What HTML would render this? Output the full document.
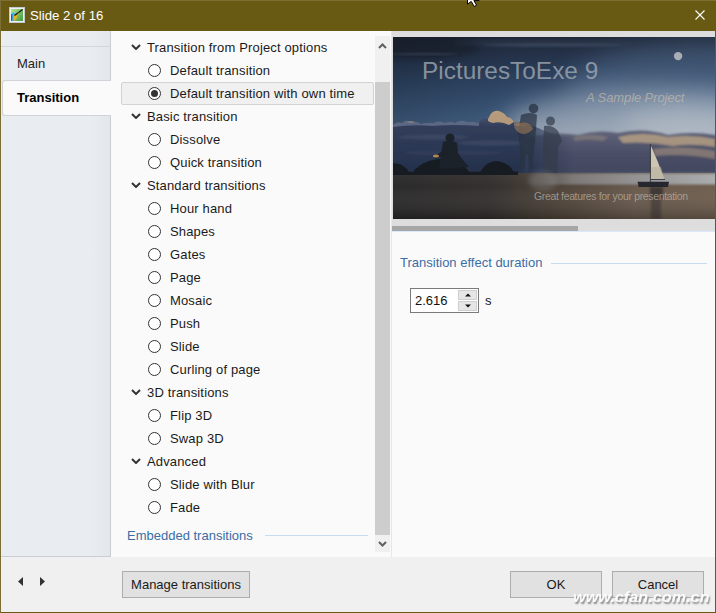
<!DOCTYPE html>
<html><head><meta charset="utf-8">
<style>
*{box-sizing:border-box;margin:0;padding:0}
html,body{width:716px;height:613px;overflow:hidden;background:#695a13}
body{position:relative;font-family:"Liberation Sans",sans-serif;font-size:13px;color:#1a1a1a}
.abs{position:absolute}
#win{position:absolute;left:0;top:0;width:716px;height:613px;background:#695a13}
#title{position:absolute;left:30px;top:7px;color:#fff;font-size:13.2px;line-height:18px}
#left{position:absolute;left:1px;top:31px;width:110px;height:526px;background:linear-gradient(to right,#e9ecf0 0,#e9ecf0 90px,#e3e6ea 109px);border-right:1px solid #c9ccd1;border-bottom:1px solid #c9ccd1}
#mid{position:absolute;left:111px;top:31px;width:280px;height:526px;background:#fafafa}
#split{position:absolute;left:391px;top:31px;width:1px;height:526px;background:#dbe7fb}
#right{position:absolute;left:392px;top:31px;width:323px;height:526px;background:#fafafa}
#bottom{position:absolute;left:1px;top:557px;width:714px;height:55px;background:#f0f0f0}
.row{position:absolute;left:0;height:23px;line-height:23px;white-space:nowrap;letter-spacing:0.15px}
.hdr{left:36px}
.itm{left:59px}
.chev{position:absolute;left:20px;top:9px}
.radio{position:absolute;left:37px;top:5px;width:13px;height:13px;border:1px solid #333;border-radius:50%;background:#fff}
.btn{position:absolute;top:571px;height:27px;background:#e1e1e1;border:1px solid #adadad;text-align:center;line-height:26px;color:#1a1a1a}
</style></head><body>
<div id="win">
  <!-- title icon -->
  <svg class="abs" style="left:9px;top:7px" width="16" height="16" viewBox="0 0 16 16">
    <defs><linearGradient id="ig" x1="0" y1="0" x2="1" y2="1"><stop offset="0" stop-color="#b4e69a"/><stop offset="1" stop-color="#3f9a3a"/></linearGradient></defs>
    <rect x="0.5" y="0.5" width="15" height="15" fill="#eef0f4" stroke="#c4c8d0"/>
    <rect x="2" y="2" width="12" height="12" fill="url(#ig)"/>
    <path d="M2 14 L2 7.8 Q2.4 5.8 4.6 5.8 L6 5.8 L4.8 14 Z" fill="#42b4e6"/>
    <path d="M2 13.8 L2 8.2 Q2.4 7 3.4 7 L3.2 13.8 Z" fill="#1a5fb0"/>
    <path d="M4.6 8.2 Q6.5 7 8.2 8.4 L7.8 11 Q7 13 6 13.6 L5 13.6 Q4.2 12 4.6 11 Z" fill="#e8b020"/>
    <path d="M5.5 8.6 L13.6 2.6" stroke="#1a1a10" stroke-width="1.3"/>
    <path d="M8.5 7 L10 5.6" stroke="#d4a020" stroke-width="0.6"/>
  </svg>
  <div id="title">Slide 2 of 16</div>
  <svg class="abs" style="left:695px;top:10px" width="10" height="10" viewBox="0 0 10 10"><path d="M0.5 0.5L9.5 9.5M9.5 0.5L0.5 9.5" stroke="#fff" stroke-width="1.1"/></svg>

  <div id="left">
    <div class="abs" style="left:0;top:15px;width:109px;height:1px;background:#d3d6db"></div>
    <div class="abs" style="left:16px;top:24px;line-height:18px;color:#1e1e1e">Main</div>
    <div class="abs" style="left:1px;top:49px;width:109px;height:36px;background:#fafafa;border:1px solid #d0d3d8;border-right:none;border-radius:3px 0 0 3px"></div>
    <div class="abs" style="left:16px;top:58px;line-height:18px;font-weight:bold;color:#000">Transition</div>
  </div>

  <div id="mid">
    <!-- selection -->
    <div class="abs" style="left:10px;top:51px;width:253px;height:23px;background:#f0f0f0;border:1px solid #d2d2d2;border-radius:2px"></div>
    <div id="list">
<svg class="abs" style="left:20px;top:13px" width="10" height="6" viewBox="0 0 10 6"><path d="M1 1L5 5L9 1" fill="none" stroke="#333" stroke-width="2"/></svg><div class="row hdr" style="top:5px">Transition from Project options</div>
<div class="radio" style="top:33px"></div><div class="row itm" style="top:28px">Default transition</div>
<div class="radio" style="top:56px"></div><div class="abs" style="left:40px;top:59px;width:7px;height:7px;border-radius:50%;background:#333"></div><div class="row itm" style="top:51px">Default transition with own time</div>
<svg class="abs" style="left:20px;top:82px" width="10" height="6" viewBox="0 0 10 6"><path d="M1 1L5 5L9 1" fill="none" stroke="#333" stroke-width="2"/></svg><div class="row hdr" style="top:74px">Basic transition</div>
<div class="radio" style="top:102px"></div><div class="row itm" style="top:97px">Dissolve</div>
<div class="radio" style="top:125px"></div><div class="row itm" style="top:120px">Quick transition</div>
<svg class="abs" style="left:20px;top:151px" width="10" height="6" viewBox="0 0 10 6"><path d="M1 1L5 5L9 1" fill="none" stroke="#333" stroke-width="2"/></svg><div class="row hdr" style="top:143px">Standard transitions</div>
<div class="radio" style="top:171px"></div><div class="row itm" style="top:166px">Hour hand</div>
<div class="radio" style="top:194px"></div><div class="row itm" style="top:189px">Shapes</div>
<div class="radio" style="top:217px"></div><div class="row itm" style="top:212px">Gates</div>
<div class="radio" style="top:240px"></div><div class="row itm" style="top:235px">Page</div>
<div class="radio" style="top:263px"></div><div class="row itm" style="top:258px">Mosaic</div>
<div class="radio" style="top:286px"></div><div class="row itm" style="top:281px">Push</div>
<div class="radio" style="top:309px"></div><div class="row itm" style="top:304px">Slide</div>
<div class="radio" style="top:332px"></div><div class="row itm" style="top:327px">Curling of page</div>
<svg class="abs" style="left:20px;top:358px" width="10" height="6" viewBox="0 0 10 6"><path d="M1 1L5 5L9 1" fill="none" stroke="#333" stroke-width="2"/></svg><div class="row hdr" style="top:350px">3D transitions</div>
<div class="radio" style="top:378px"></div><div class="row itm" style="top:373px">Flip 3D</div>
<div class="radio" style="top:401px"></div><div class="row itm" style="top:396px">Swap 3D</div>
<svg class="abs" style="left:20px;top:427px" width="10" height="6" viewBox="0 0 10 6"><path d="M1 1L5 5L9 1" fill="none" stroke="#333" stroke-width="2"/></svg><div class="row hdr" style="top:419px">Advanced</div>
<div class="radio" style="top:447px"></div><div class="row itm" style="top:442px">Slide with Blur</div>
<div class="radio" style="top:470px"></div><div class="row itm" style="top:465px">Fade</div>
</div>
    <!-- scrollbar -->
    <div class="abs" style="left:264px;top:5px;width:15px;height:516px;background:#f0f0f0"></div>
    <div class="abs" style="left:264px;top:51px;width:15px;height:453px;background:#cdcdcd"></div>
    <svg class="abs" style="left:267px;top:11px" width="9" height="7" viewBox="0 0 9 7"><path d="M1 6L4.5 2.5L8 6" fill="none" stroke="#606060" stroke-width="2"/></svg>
    <svg class="abs" style="left:267px;top:510px" width="9" height="7" viewBox="0 0 9 7"><path d="M1 1L4.5 4.5L8 1" fill="none" stroke="#606060" stroke-width="2"/></svg>
    <div class="abs" style="left:16px;top:496px;color:#3a6ea5;line-height:18px">Embedded transitions</div>
    <div class="abs" style="left:154px;top:504px;width:103px;height:1px;background:#c9dbef"></div>
  </div>
  <div id="split"></div>

  <div id="right">
    <div class="abs" style="left:0;top:0;width:323px;height:200px;background:#dddddd"></div>
    <div id="photo" class="abs" style="left:1px;top:6px;width:322px;height:182px;overflow:hidden;background:#2c3e57"><svg width="322" height="182" viewBox="0 0 322 182">
<defs>
<linearGradient id="sky" x1="0" y1="0" x2="0" y2="1">
<stop offset="0" stop-color="#20293a"/>
<stop offset="0.1" stop-color="#26344c"/>
<stop offset="0.25" stop-color="#304868"/>
<stop offset="0.42" stop-color="#3f5c80"/>
<stop offset="0.55" stop-color="#4f6d90"/>
<stop offset="0.75" stop-color="#6a84a2"/>
</linearGradient>
<radialGradient id="haze" cx="0.78" cy="0.58" r="0.45">
<stop offset="0" stop-color="#c2c6cc" stop-opacity="0.85"/>
<stop offset="0.5" stop-color="#aab4bf" stop-opacity="0.45"/>
<stop offset="1" stop-color="#8fa0b2" stop-opacity="0"/>
</radialGradient>
<linearGradient id="skyL" x1="0" y1="0" x2="1" y2="0">
<stop offset="0" stop-color="#000" stop-opacity="0.2"/>
<stop offset="0.4" stop-color="#000" stop-opacity="0.05"/>
<stop offset="1" stop-color="#000" stop-opacity="0"/>
</linearGradient>
<linearGradient id="waterV" x1="0" y1="0" x2="0" y2="1">
<stop offset="0" stop-color="#fff" stop-opacity="0.06"/>
<stop offset="0.3" stop-color="#fff" stop-opacity="0.02"/>
<stop offset="1" stop-color="#000" stop-opacity="0.22"/>
</linearGradient>
<linearGradient id="waterH" x1="0" y1="0" x2="1" y2="0">
<stop offset="0" stop-color="#272627"/>
<stop offset="0.3" stop-color="#2f2c2a"/>
<stop offset="0.5" stop-color="#4a3f35"/>
<stop offset="0.75" stop-color="#66574a"/>
<stop offset="1" stop-color="#6c5c4c"/>
</linearGradient>
<linearGradient id="strip" x1="0" y1="0" x2="1" y2="0">
<stop offset="0" stop-color="#8a8c90" stop-opacity="0"/>
<stop offset="0.25" stop-color="#9a9ea4" stop-opacity="0.55"/>
<stop offset="1" stop-color="#b4b8bd" stop-opacity="0.9"/>
</linearGradient>
<linearGradient id="cloudL" x1="0" y1="0" x2="0" y2="1">
<stop offset="0" stop-color="#4e5a78"/>
<stop offset="0.25" stop-color="#313d5a"/>
<stop offset="1" stop-color="#24304a"/>
</linearGradient>
<linearGradient id="cloudR" x1="0" y1="0" x2="0" y2="1">
<stop offset="0" stop-color="#60647a"/>
<stop offset="0.5" stop-color="#4a4e66"/>
<stop offset="1" stop-color="#40465e"/>
</linearGradient>
<filter id="b1" x="-20%" y="-20%" width="140%" height="140%"><feGaussianBlur stdDeviation="1.2"/></filter>
<filter id="b2" x="-30%" y="-30%" width="160%" height="160%"><feGaussianBlur stdDeviation="2.5"/></filter>
<filter id="b6" x="-50%" y="-100%" width="200%" height="300%"><feGaussianBlur stdDeviation="12"/></filter>
<linearGradient id="fadeG" x1="0" y1="0" x2="1" y2="0"><stop offset="0" stop-color="#fff"/><stop offset="0.72" stop-color="#fff"/><stop offset="1" stop-color="#000"/></linearGradient>
<mask id="fadeM" maskUnits="userSpaceOnUse" x="-10" y="0" width="200" height="182"><rect x="-10" y="0" width="190" height="182" fill="url(#fadeG)"/></mask>
<filter id="b05" x="-20%" y="-20%" width="140%" height="140%"><feGaussianBlur stdDeviation="0.6"/></filter>
</defs>
<rect width="322" height="182" fill="url(#sky)"/>
<ellipse cx="300" cy="55" rx="130" ry="50" fill="#5a7595" opacity="0.45" filter="url(#b6)"/>
<ellipse cx="260" cy="90" rx="150" ry="40" fill="#a8b4c2" opacity="0.6" filter="url(#b6)"/>
<ellipse cx="250" cy="100" rx="140" ry="22" fill="#b4bcc6" opacity="0.6" filter="url(#b6)"/>
<ellipse cx="290" cy="92" rx="60" ry="22" fill="#c0c6cc" opacity="0.5" filter="url(#b6)"/>
<rect width="322" height="140" fill="url(#skyL)"/>
<!-- dark cloud streaks top-left -->
<ellipse cx="30" cy="10" rx="55" ry="12" fill="#141a26" opacity="0.55" filter="url(#b2)"/>
<ellipse cx="150" cy="6" rx="90" ry="3" fill="#4a5a70" opacity="0.25" filter="url(#b2)"/>
<ellipse cx="30" cy="17" rx="35" ry="1.2" fill="#5a6a80" opacity="0.3" filter="url(#b1)"/>
<ellipse cx="160" cy="8" rx="70" ry="1.5" fill="#4a5a70" opacity="0.45" filter="url(#b1)"/>
<!-- right clouds -->
<g filter="url(#b1)">
<path d="M135 100 Q160 94 185 98 Q205 92 225 96 Q250 90 275 98 Q300 94 322 98 L332 98 L332 140 L135 140 Z" fill="url(#cloudR)"/>
<path d="M225 100 Q250 94 275 100 Q300 97 322 102 L322 110 Q300 106 280 109 Q255 104 230 106 Z" fill="#c7ac88" opacity="0.7"/>
<path d="M260 112 Q290 108 322 114 L322 122 Q290 116 262 119 Z" fill="#b89e80" opacity="0.5"/>
<path d="M180 100 Q200 96 215 100 L210 104 Q195 101 182 104 Z" fill="#a09080" opacity="0.45"/>
</g>
<!-- left clouds -->
<g filter="url(#b05)" mask="url(#fadeM)">
<path d="M-10 90 L0 88 Q4 84 9 86 Q13 82 18 85 Q24 84 28 87 Q34 85 40 86 Q46 83 52 86 Q58 84 62 86 Q68 82 74 85 Q80 84 86 86 Q90 80 95 82 Q99 72 106 74 Q112 76 114 80 Q118 80 121 85 Q128 84 134 87 Q144 90 152 94 Q165 98 180 102 L180 140 L-10 140 Z" fill="url(#cloudL)"/>
<path d="M0 88 Q4 84 9 86 Q13 82 18 85 Q24 84 28 87 Q34 85 40 86 Q46 83 52 86 Q58 84 62 86 Q68 82 74 85 Q80 84 86 86 L86 89 Q60 87 40 89 Q20 87 0 90 Z" fill="#7a86a0" opacity="0.55"/>
<path d="M95 82 Q99 72 106 74 Q112 76 114 80 Q118 80 121 85 L116 88 Q108 84 100 86 Q96 85 95 84 Z" fill="#d2ae80" opacity="0.8"/>
<path d="M121 85 Q128 84 134 87 L132 90 Q126 88 121 89 Z" fill="#b89a78" opacity="0.5"/>
<path d="M14 85 Q18 83 22 85 L18 86 Z" fill="#c0a080" opacity="0.5"/>
</g>
<g filter="url(#b1)">
<ellipse cx="40" cy="100" rx="35" ry="2.5" fill="#4a5672" opacity="0.45"/>
<ellipse cx="100" cy="106" rx="35" ry="2.5" fill="#4a5672" opacity="0.45"/>
<ellipse cx="60" cy="116" rx="50" ry="2" fill="#3e4a66" opacity="0.4"/>
</g>
<!-- water -->
<rect x="0" y="136" width="322" height="46" fill="url(#waterH)"/>
<rect x="0" y="136" width="322" height="46" fill="url(#waterV)"/>
<rect x="130" y="136.5" width="200" height="11" fill="url(#strip)" filter="url(#b1)"/>
<!-- rocks -->
<g fill="#191c24" filter="url(#b05)">
<path d="M0 126 Q8 126 14 132 L18 138 L0 138 Z"/>
<path d="M18 138 Q26 124 46 122 Q66 122 74 132 L78 138 Z"/>
<path d="M86 138 Q92 124 104 124 Q118 126 122 138 Z"/>
<path d="M0 135 L125 134.5 L125 138 L0 138 Z"/>
</g>
<!-- sitting person -->
<g fill="#1b202b" filter="url(#b05)">
<circle cx="57" cy="101" r="4.5"/>
<path d="M50 105 Q57 102 64 106 L65 116 Q70 124 76 130 L46 132 Q48 118 50 105 Z"/>
<path d="M51 112 L41 121 L44 122 L53 116 Z"/>
</g>
<ellipse cx="43" cy="119" rx="3" ry="1.5" fill="#d09a5a" opacity="0.8" filter="url(#b05)"/>
<!-- standing ghosts -->
<g filter="url(#b05)">
<circle cx="140.5" cy="71.5" r="4.8" fill="#2a3142" opacity="0.75"/>
<path d="M128 78 Q138 74 144 78 L143 92 L142 104 L140 120 L140 132 L137 132 L135 118 L133 118 L131 132 L127 132 L127 112 L125 96 Z" fill="#2a3142" opacity="0.72"/>
<path d="M121 90 Q127 84 134 86 Q139 88 140 92 Q136 97 130 97 Q124 96 121 90 Z" fill="#b08858" opacity="0.5"/>
<circle cx="157.5" cy="84" r="4.5" fill="#333a4a" opacity="0.7"/>
<path d="M151 89 Q160 88 165 94 L169 104 L165 110 L164 136 L150 136 L150 110 Z" fill="#333a4a" opacity="0.7"/>
</g>
<ellipse cx="150" cy="144" rx="14" ry="10" fill="#b0b4b8" opacity="0.2" filter="url(#b2)"/>
<!-- sailboat -->
<path d="M257.6 108 Q265 124 271.2 142 L257.6 142 Z" fill="#cdc6b0" filter="url(#b05)"/>
<path d="M257.6 130 L268 130 L271.2 142 L257.6 142 Z" fill="#b8b2a0" opacity="0.6" filter="url(#b05)"/>
<line x1="257.4" y1="107" x2="257.4" y2="145" stroke="#2a2a30" stroke-width="0.8"/>
<line x1="257.6" y1="142.5" x2="272" y2="142.5" stroke="#3a4050" stroke-width="1"/>
<path d="M244.6 144.8 L276 144.8 L275 150 L245.6 150 Z" fill="#26282f" filter="url(#b05)"/>
<rect x="257" y="150" width="13" height="10" fill="#1f1f24" opacity="0.55" filter="url(#b1)"/>
<rect x="258" y="158" width="10" height="24" fill="#1f1f24" opacity="0.35" filter="url(#b1)"/>
<!-- moon -->
<circle cx="285.1" cy="19.1" r="4.2" fill="#a9adb5" filter="url(#b05)"/>
<!-- texts -->
<text x="29" y="42" font-family="Liberation Sans" font-size="24.4" fill="#a2aab4" fill-opacity="0.78">PicturesToExe 9</text>
<text x="193" y="65" font-family="Liberation Sans" font-style="italic" font-size="13" letter-spacing="-0.1" fill="#d0c2b2" fill-opacity="0.62">A Sample Project</text>
<text x="141" y="162.5" font-family="Liberation Sans" font-size="10.5" letter-spacing="-0.35" fill="#c0b8aa" fill-opacity="0.7">Great features for your presentation</text>
</svg></div>
    <div class="abs" style="left:0;top:195px;width:186px;height:5px;background:#a6a6a6"></div>
    <div class="abs" style="left:0;top:200px;width:323px;height:1px;background:#dbe7fb"></div>
    <div class="abs" style="left:8px;top:223px;color:#3a6ea5;line-height:18px">Transition effect duration</div>
    <div class="abs" style="left:159px;top:232px;width:156px;height:1px;background:#c9dbef"></div>
    <div class="abs" style="left:18px;top:257px;width:69px;height:25px;background:#fff;border:1px solid #7a7a7a"></div>
    <div class="abs" style="left:23px;top:261px;line-height:18px;color:#111">2.616</div>
    <div class="abs" style="left:66px;top:259px;width:19px;height:10px;background:#e6e6e6;border:1px solid #cfcfcf"></div>
    <div class="abs" style="left:66px;top:270px;width:19px;height:10px;background:#e6e6e6;border:1px solid #cfcfcf"></div>
    <svg class="abs" style="left:73px;top:262px" width="6" height="4"><path d="M0 3.5L3 0.5L6 3.5Z" fill="#111"/></svg>
    <svg class="abs" style="left:73px;top:273px" width="6" height="4"><path d="M0 0.5L3 3.5L6 0.5Z" fill="#111"/></svg>
    <div class="abs" style="left:93px;top:261px;line-height:18px">s</div>
  </div>

  <div id="bottom">
    <svg class="abs" style="left:17px;top:20px" width="5" height="9"><path d="M5 0L0 4.5L5 9Z" fill="#333"/></svg>
    <svg class="abs" style="left:39px;top:20px" width="5" height="9"><path d="M0 0L5 4.5L0 9Z" fill="#333"/></svg>
  </div>
  <div class="btn" style="left:122px;width:128px">Manage transitions</div>
  <div class="btn" style="left:510px;width:92px">OK</div>
  <div class="btn" style="left:612px;width:92px">Cancel</div>
  <div class="abs" style="left:0;top:612px;width:716px;height:1px;background:#695a13"></div>
  <div class="abs" style="left:715px;top:31px;width:1px;height:582px;background:#695a13"></div>
  <div class="abs" style="left:0;top:0;width:1px;height:613px;background:#7b6f36"></div>
  <div class="abs" style="left:0;top:0;width:716px;height:1px;background:#7b6f36"></div>
  <svg class="abs" style="left:465px;top:0" width="16" height="9" viewBox="0 0 16 9"><path d="M2.5 -1 L2.5 4.2 L6.2 1.4 L9.2 6.5 L11.6 5.2 L8.9 0.6 L14 0.6 L14 -1 Z" fill="#fff" stroke="#000" stroke-width="1"/></svg>
  <div id="wm" class="abs" style="left:573px;top:589px;font-size:14px;font-weight:bold;font-style:italic;color:#fbfbfb;text-shadow:1px 1.5px 1.5px #8a8a8a;line-height:16px;white-space:nowrap;transform:scaleX(1.16);transform-origin:0 0">www.cfan.com.cn</div>
</div>
</body></html>
